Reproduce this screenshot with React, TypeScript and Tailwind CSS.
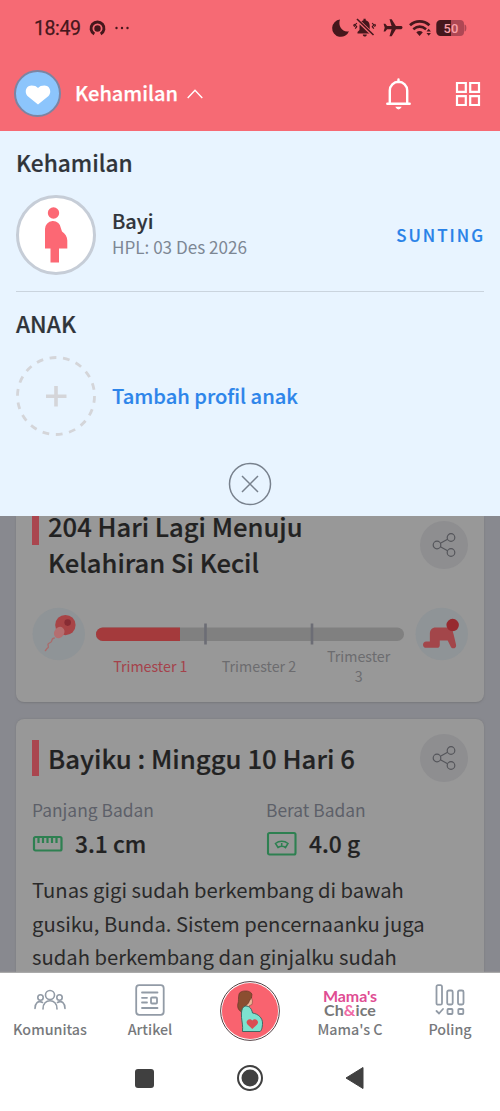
import React from "react";

const Share = () => (
  <div className="flex h-12 w-12 shrink-0 items-center justify-center rounded-full bg-[#8e8e90]">
    <svg width="24" height="26" viewBox="0 0 24 26" fill="none" stroke="#55565b" strokeWidth="1.2">
      <circle cx="5" cy="13" r="3.8" />
      <circle cx="19" cy="5.500" r="3.8" />
      <circle cx="19" cy="20.500" r="3.8" />
      <path d="M8.4 11.200 15.6 7.3M8.4 14.800 15.6 18.7" />
    </svg>
  </div>
);

function StatusBar() {
  return (
    <div className="flex h-[56px] items-center justify-between pr-[33px] pl-[34px] text-[#45171c]">
      <div className="flex items-center">
        <span className="w-[55px] pt-0.5 font-['Roboto',sans-serif] text-[19.500px] leading-6 tracking-[-0.400px] [-webkit-text-stroke:0.25px_#45171c]">18:49</span>
        <svg width="17" height="17" viewBox="0 0 17 17">
          <path d="M5.300 14.100A6.500 6.500 0 1 1 11.700 14.100" fill="none" stroke="currentColor" strokeWidth="2.900" />
          <circle cx="8.500" cy="8.500" r="3.200" fill="currentColor" />
        </svg>
        <svg className="ml-2" width="16" height="4" viewBox="0 0 16 4" fill="currentColor">
          <circle cx="2.5" cy="2" r="1.2" />
          <circle cx="8" cy="2" r="1.2" />
          <circle cx="13.5" cy="2" r="1.2" />
        </svg>
      </div>
      <svg width="136" height="22" viewBox="331 16 136 22" fill="currentColor">
        <path d="M340 18.500A8.700 8.700 0 1 0 349 30.200C343 31.800 337.500 25.500 340 18.500Z" />
        <path d="M357.5 32.5v-1.4l2-2v-4.4c0-3 1.8-5 4-5.5v-1.4h2.2v1.4c2.3.5 4 2.500 4 5.500v4.400l2 2v1.400ZM362.800 33.500h4c0 2.800-4 2.800-4 0Z" />
        <path d="M356.500 18 373.500 34.200" stroke="#f66a74" strokeWidth="3.600" />
        <path d="M357 18 373.500 34" stroke="currentColor" strokeWidth="1.600" />
        <path d="M356.800 22l-1.600 2 1.500 1.700-1.500 2M354.600 23l-.8 1.200.9 1.600M372.200 22l1.600 2-1.500 1.700 1.500 2M374.600 23l.8 1.200-.9 1.600" fill="none" stroke="currentColor" strokeWidth="1.200" />
        <path d="M402.500 26.500c0-1-1-1.400-2-1.400h-4.600l-4.200-6.800h-2.200l2.100 6.800h-4.500l-1.800-2.300h-1.700l1.100 3.900-1.100 3.900h1.700l1.800-2.300h4.500l-2.100 6.900h2.200l4.200-6.900h4.600c1 0 2-.6 2-1.800Z" />
        <path d="M410 24.200c5.800-5.100 13.600-5.100 19.400 0" fill="none" stroke="currentColor" strokeWidth="2.800" />
        <path d="M413.300 28.200c4.200-3.400 8.600-3.400 12.800 0" fill="none" stroke="currentColor" strokeWidth="2.600" />
        <path d="M416.300 31.200c2-1.600 4.500-1.600 6.500 0L419.600 35Z" />
        <path d="M426.500 30.500 428.700 27.800 430.900 30.500ZM426.500 32 428.700 34.800 430.900 32Z" />
        <path d="M451 19h9a4 4 0 0 1 4 4v8a4 4 0 0 1-4 4h-9Z" fill="#ae4754" />
        <path d="M464.500 23.500c2.500 0 2.500 7 0 7Z" fill="#ae4754" />
        <path d="M440.500 19H451v16h-10.500a4.200 4.200 0 0 1-4.200-4.200v-7.600a4.200 4.200 0 0 1 4.200-4.200Z" />
        <text x="443.500" y="31.700" className="font-['Roboto',sans-serif] text-[13px] font-medium" fill="#f9a0a8">50</text>
      </svg>
    </div>
  );
}

function Header() {
  return (
    <header className="h-[131px] shrink-0 bg-[#f66a74]">
      <StatusBar />
      <div className="flex h-[75px] items-center pr-[19px] pl-3.5">
        <div className="flex h-[47px] w-[47px] items-center justify-center rounded-full border-2 border-[#7b85a3] bg-[#8cc5fc]">
          <svg className="mt-0.5" width="26" height="22" viewBox="0 0 26 22" fill="#fff">
            <path d="M13 20.500 2.500 12C-1 8 1 1.500 6.500 1.500c3 0 5 .8 6.500 2.500 1.500-1.700 3.500-2.500 6.500-2.500C25 1.500 27 8 23.500 12Z" />
          </svg>
        </div>
        <span className="ml-3.5 w-[112px] pb-px text-[20px] font-medium whitespace-nowrap text-white [-webkit-text-stroke:0.25px_#fff]">Kehamilan</span>
        <svg width="16" height="10" viewBox="0 0 16 10" fill="none" stroke="#fff" strokeWidth="1.4"><path d="M.7 9 8 1.200 15.300 9" /></svg>
        <svg className="ml-auto" width="26" height="32" viewBox="0 0 26 32" fill="none" stroke="#fff" strokeWidth="2.400" strokeLinecap="round">
          <path d="M12.500 1.500V4M3.800 25.500V12.500a8.700 8.700 0 0 1 17.400 0V25.500M1.300 25.700H23.700" />
          <path d="M10.300 29.300c1 2 3.400 2 4.400 0Z" fill="#fff" strokeWidth="1.200" />
        </svg>
        <svg className="ml-[43px]" width="26" height="26" viewBox="0 0 26 26" fill="none" stroke="#fff" strokeWidth="2.200">
          <path d="M2 2H10.800V10.800H2ZM15.200 2H24V10.800H15.200ZM2 15.200H10.800V24H2ZM15.200 15.200H24V24H15.200Z" />
        </svg>
      </div>
    </header>
  );
}

function ProfilePanel() {
  return (
    <section className="flex h-[385px] shrink-0 flex-col bg-[#e8f4ff] px-4">
      <h2 className="mt-4 h-8 text-[22.700px] leading-8 font-medium text-[#30343a] [-webkit-text-stroke:0.2px_#30343a]">Kehamilan</h2>
      <div className="mt-4 flex h-20 items-center">
        <div className="flex h-20 w-20 items-center justify-center rounded-full border-[3px] border-[#c6cdd7] bg-white">
          <svg width="24" height="58" viewBox="0 0 24 58" fill="#fc6874">
            <circle cx="9.500" cy="7" r="5.700" />
            <path d="M1 42.500V23.500a8 8 0 0 1 16-1l1 3c3 2 5.300 5 5.300 9v8H15V56.500H6.500V42.500Z" />
          </svg>
        </div>
        <div className="ml-4 flex flex-col pb-0.5">
          <span className="text-[20px] leading-[26px] font-medium text-[#30343a] [-webkit-text-stroke:0.2px_#30343a]">Bayi</span>
          <span className="text-[17.100px] leading-[26px] text-[#7d8794]">HPL: 03 Des 2026</span>
        </div>
        <span className="mr-[-1px] ml-auto text-[16.900px] font-medium tracking-[2px] text-[#2882e8] [-webkit-text-stroke:0.2px_#2882e8]">SUNTING</span>
      </div>
      <div className="mt-4 h-px shrink-0 bg-[#cad4de]" />
      <h2 className="mt-4 h-8 text-[22.700px] leading-8 font-medium text-[#30343a] [-webkit-text-stroke:0.2px_#30343a]">ANAK</h2>
      <div className="mt-4 flex h-20 items-center">
        <svg width="80" height="80" viewBox="0 0 80 80" fill="none" stroke="#d4d5d9">
          <circle cx="40" cy="40" r="38.500" strokeWidth="2.800" strokeDasharray="6.800 6.640" />
          <path d="M40 30V50.500M30 40.300H50.500" strokeWidth="3.600" />
        </svg>
        <span className="ml-4 text-[20.150px] font-medium text-[#2d85ea] [-webkit-text-stroke:0.2px_#2d85ea]">Tambah profil anak</span>
      </div>
      <svg className="mx-auto mt-[26px]" width="44" height="44" viewBox="0 0 44 44" fill="none" stroke="#78818d" strokeWidth="1.500">
        <circle cx="22" cy="22" r="20.500" />
        <path d="M14 14 30 30M30 14 14 30" />
      </svg>
    </section>
  );
}

function CountdownCard() {
  return (
    <div className="h-[186px] shrink-0 rounded-b-lg bg-[#989898] px-4 shadow-[0_1px_2px_#77787c]">
      <div className="flex h-[75px]">
        <div className="h-[29px] w-[7px] bg-[#aa464f]" />
        <h1 className="mt-[-8px] ml-[9px] flex-1 text-[25.600px] leading-9 font-medium text-[#222] [-webkit-text-stroke:0.2px_#222]">204 Hari Lagi Menuju<br />Kelahiran Si Kecil</h1>
        <div className="mt-[5px]"><Share /></div>
      </div>
      <div className="mt-4 flex">
        <svg width="54" height="54" viewBox="0 0 54 54">
          <circle cx="27" cy="27" r="26.500" fill="#8f9497" />
          <circle cx="33.700" cy="18" r="10.300" fill="#a84446" />
          <circle cx="36" cy="15.500" r="3.300" fill="#882c34" />
          <ellipse cx="27.500" cy="25.500" rx="5" ry="6" fill="#b46f70" transform="rotate(35 27.500 25.500)" />
          <path d="M23 31c-5 0-1 4-5 5s0 4-2 5-1 2-3 3" fill="none" stroke="#a96c6c" strokeWidth="1.400" />
        </svg>
        <div className="ml-2.5 w-[308px]">
          <svg className="mt-4" width="308" height="22" viewBox="0 0 308 22">
            <rect y="4.500" width="308" height="13.500" rx="6.750" fill="#808080" />
            <path d="M84 4.500H6.750a6.750 6.750 0 0 0 0 13.500H84Z" fill="#a43a3c" />
            <path d="M109.500 .5V21.500M216 .5V21.500" stroke="#6c6d75" strokeWidth="2.600" />
          </svg>
          <div className="mt-px grid grid-cols-3 items-center text-center text-[14.250px] leading-5 text-[#6c6c6f]">
            <span className="pl-[7px] text-[#a5424b]">Trimester 1</span>
            <span className="pl-[19px]">Trimester 2</span>
            <span className="pr-[7px] pl-5">Trimester<br />3</span>
          </div>
        </div>
        <svg className="ml-[11px]" width="54" height="54" viewBox="0 0 54 54">
          <circle cx="27" cy="27" r="26.500" fill="#8f9497" />
          <path d="M21 20.500h16l2 7 2.500 10.500c.5 4-4.500 4.500-5.500 1.500l-3-6H25v4.500c0 2-1 3-3 3H11.500c-4.500 0-4.500-6.500 0-6.500H15V27c0-4 2-6.500 6-6.500Z" fill="#a3464a" />
          <circle cx="38" cy="18" r="6.300" fill="#972a2f" />
        </svg>
      </div>
    </div>
  );
}

function BabyCard() {
  return (
    <div className="mt-[17px] h-[260px] shrink-0 rounded-t-lg bg-[#989898] px-4 pt-[15px] shadow-[0_0_2px_#77787c]">
      <div className="flex h-12">
        <div className="mt-[6px] h-9 w-[7px] bg-[#aa464f]" />
        <h1 className="mt-[5.500px] ml-[9px] flex-1 text-[25.750px] leading-9 font-medium text-[#222] [-webkit-text-stroke:0.2px_#222]">Bayiku : Minggu 10 Hari 6</h1>
        <Share />
      </div>
      <div className="mt-4 grid grid-cols-2 gap-x-8">
        <div>
          <p className="text-[17.400px] leading-6 text-[#5d6069]">Panjang Badan</p>
          <div className="mt-1 flex h-9 items-center gap-3">
            <svg width="31" height="18" viewBox="0 0 31 18" fill="none" stroke="#2e8051" strokeWidth="2.200">
              <rect x="2" y="2" width="27.500" height="13.500" rx="1.500" /><path d="M6.500 2V8M11 2V8M15.500 2V8M20 2V8M24.500 2V8" />
            </svg>
            <span className="text-[22.800px] font-medium text-[#222] [-webkit-text-stroke:0.2px_#222]">3.1 cm</span>
          </div>
        </div>
        <div>
          <p className="text-[17.400px] leading-6 text-[#5d6069]">Berat Badan</p>
          <div className="mt-1 flex h-9 items-center gap-3">
            <svg width="31" height="26" viewBox="0 0 31 26" fill="none" stroke="#2e8051" strokeWidth="2.100">
              <rect x="2" y="2" width="27.500" height="21.500" rx="1.500" />
              <path d="M9.500 12.500c3.500-3 9-3 12.500 0l-2.500 4c-2-1.500-5-1.500-7.500 0ZM15.700 16V12" strokeWidth="1.600" />
            </svg>
            <span className="text-[22.800px] font-medium text-[#222] [-webkit-text-stroke:0.2px_#222]">4.0 g</span>
          </div>
        </div>
      </div>
      <p className="mt-[11px] text-[20.230px] leading-[33.500px] whitespace-nowrap text-[#2a2a2a]">Tunas gigi sudah berkembang di bawah<br />gusiku, Bunda. Sistem pencernaanku juga<br />sudah berkembang dan ginjalku sudah</p>
    </div>
  );
}

function Tab({ label, children }: { label: string; children: React.ReactNode }) {
  return (
    <div className="flex w-[100px] flex-col items-center">
      <div className="flex h-[45px] items-center pt-2">{children}</div>
      <span className="text-[14.300px] leading-[22px] font-medium text-[#77797c]">{label}</span>
    </div>
  );
}

function BottomNav() {
  return (
    <nav className="z-10 h-[138px] shrink-0 bg-white shadow-[0_-1px_1px_#aaaaaa]">
      <div className="flex h-[76px]">
        <Tab label="Komunitas">
          <svg width="32" height="22" viewBox="0 0 32 22" fill="none" stroke="#929ba6" strokeWidth="1.600" strokeLinecap="round">
            <circle cx="16" cy="6" r="4.500" /><circle cx="6.500" cy="8.500" r="2.700" /><circle cx="25.500" cy="8.500" r="2.700" />
            <path d="M9 20C8.500 9 23.500 9 23 20M1 19.500C1 14.500 4 11 8.500 13.500M31 19.500C31 14.500 28 11 23.500 13.500" />
          </svg>
        </Tab>
        <Tab label="Artikel">
          <svg width="30" height="32" viewBox="0 0 30 32" fill="none" stroke="#929ba6" strokeWidth="1.800" strokeLinecap="round">
            <rect x="1.200" y="1.200" width="27.500" height="29.600" rx="3" /><path d="M7 8.500H22.500M7 13.800H12M7 18.500H12M7 24H22.500" /><rect x="16" y="13.500" width="6" height="6" rx="1" />
          </svg>
        </Tab>
        <div className="flex w-[100px] justify-center pt-2">
          <svg width="60" height="60" viewBox="0 0 60 60">
            <circle cx="30" cy="30" r="29.400" fill="#fff" stroke="#544044" /><circle cx="30" cy="30" r="28" fill="#f9636f" />
            <path d="M24 22 31 15.500 32.500 20 32 23.500 29.500 24.500 29 27 24 27Z" fill="#f0b597" stroke="#6b4132" strokeWidth=".5" />
            <path d="M19 13C20 9 31 8.500 32 13.500L31.500 17C30 18 29.500 20 28.500 22L25.500 25 22.500 31.500C19 30 17 27 17.800 23 19 20 18 17 19 13Z" fill="#8b4e30" stroke="#5b3325" strokeWidth=".6" />
            <path d="M24 25.500c4-1.500 7.500 1 8.500 6.500 6 1 10 5 10 10 0 4-1 8-2.500 8.500H22.500c.5-6-.5-9-1-14-.3-5 0-9 2.500-11Z" fill="#7ee2cf" stroke="#35605b" strokeWidth=".9" />
            <path d="M32.300 48 27.500 43.500c-3-3.500 2-7.500 4.800-4 2.800-3.500 7.800.5 4.800 4Z" fill="#da4d53" />
          </svg>
        </div>
        <Tab label="Mama's C">
          <div className="flex flex-col items-center pt-1.5 font-['Lato',sans-serif] text-[16px] leading-[14px] font-bold tracking-[-.1px]">
            <span className="text-[#df4d93]">Mama's</span>
            <span className="tracking-[.1px] text-[#777]">Ch<span className="text-[#f06aa5]">&amp;</span>ice</span>
          </div>
        </Tab>
        <Tab label="Poling">
          <svg width="30" height="32" viewBox="0 0 30 32" fill="none" stroke="#929ba6" strokeWidth="1.800" strokeLinecap="round">
            <rect x="1.500" y="1.200" width="5.500" height="19.500" rx="1.500" /><rect x="12.200" y="6.500" width="5.500" height="14" rx="1.500" /><rect x="23" y="6.500" width="5.500" height="14" rx="1.500" />
            <path d="M1.500 27 4 29.500 8 25" /><rect x="12.500" y="25" width="5" height="5" rx=".8" /><rect x="23.300" y="25" width="5" height="5" rx=".8" />
          </svg>
        </Tab>
      </div>
      <div className="flex h-[58px] items-center justify-center">
        <div className="h-[19px] w-[19px] rounded-[3px] bg-[#404040]" />
        <svg className="ml-[82px]" width="28" height="28" viewBox="0 0 28 28" fill="none" stroke="#404040" strokeWidth="2"><circle cx="14" cy="14" r="12" /><circle cx="14" cy="14" r="7.500" fill="#404040" /></svg>
        <svg className="mr-px ml-[81px]" width="20" height="24" viewBox="0 0 20 24" fill="#404040"><path d="M18 1.500V22.500L1 12Z" stroke="#404040" strokeLinejoin="round" /></svg>
      </div>
    </nav>
  );
}

export default function App() {
  return (
    <div className="flex h-[1111px] w-[500px] flex-col overflow-hidden bg-[#88898f] font-['Noto_Sans_CJK_SC',sans-serif]">
      <Header />
      <ProfilePanel />
      <main className="flex h-[457px] shrink-0 flex-col overflow-hidden px-4">
        <CountdownCard />
        <BabyCard />
      </main>
      <BottomNav />
    </div>
  );
}
